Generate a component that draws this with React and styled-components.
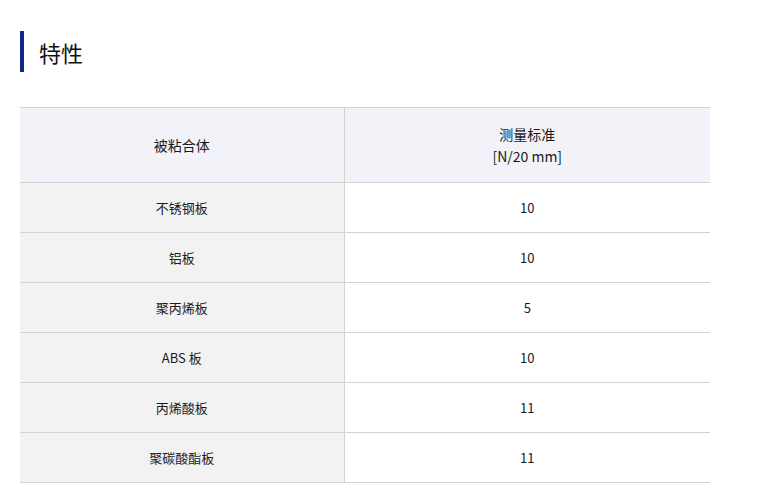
import React from "react";
import styled, { createGlobalStyle } from "styled-components";

const Global = createGlobalStyle`
  html, body { margin: 0; padding: 0; background: #fff; }
  body { font-family: "Noto Sans CJK SC", "Noto Sans", sans-serif; color: #333; }
`;

const Page = styled.div`
  padding: 31px 0 0 20px;
  width: 690px;
`;

const Heading = styled.h2`
  margin: 0;
  height: 41px;
  display: flex;
  align-items: center;
  border-left: 4px solid #0e2a84;
  padding-left: 15px;
  font-size: 22px;
  font-weight: 400;
  color: #111;
  line-height: 1;
`;

const Table = styled.table`
  margin-top: 35px;
  width: 690px;
  border-collapse: collapse;
  table-layout: fixed;
  font-size: 14px;
  color: #1a1a1a;
`;

const HeadCell = styled.th`
  background: #f2f3f8;
  font-weight: 400;
  height: 74px;
  padding: 0;
  line-height: 22px;
  border-top: 1px solid #d3d3d3;
  border-bottom: 1px solid #d3d3d3;
  border-right: ${(p) => (p.$divider ? "1px solid #d3d3d3" : "none")};
  text-align: center;
  vertical-align: middle;
`;

const Cell = styled.td`
  background: ${(p) => (p.$label ? "#f2f2f2" : "#fff")};
  height: 49px;
  padding: 0;
  font-size: 13px;
  border-bottom: 1px solid #d3d3d3;
  border-right: ${(p) => (p.$label ? "1px solid #d3d3d3" : "none")};
  text-align: center;
  vertical-align: middle;
`;

const rows = [
  ["不锈钢板", "10"],
  ["铝板", "10"],
  ["聚丙烯板", "5"],
  ["ABS 板", "10"],
  ["丙烯酸板", "11"],
  ["聚碳酸酯板", "11"],
];

export default function App() {
  return (
    <>
      <Global />
      <Page>
        <Heading>特性</Heading>
        <Table>
          <colgroup>
            <col style={{ width: "324px" }} />
            <col />
          </colgroup>
          <thead>
            <tr>
              <HeadCell $divider>被粘合体</HeadCell>
              <HeadCell>
                测量标准
                <br />
                [N/20 mm]
              </HeadCell>
            </tr>
          </thead>
          <tbody>
            {rows.map(([a, b]) => (
              <tr key={a}>
                <Cell $label>{a}</Cell>
                <Cell>{b}</Cell>
              </tr>
            ))}
          </tbody>
        </Table>
      </Page>
    </>
  );
}
